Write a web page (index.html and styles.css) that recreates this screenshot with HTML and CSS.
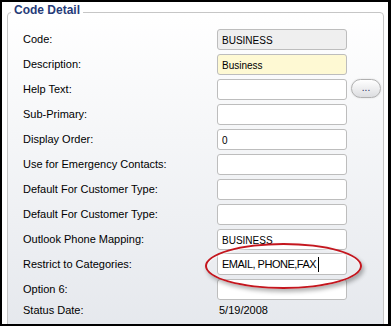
FILE: index.html
```html
<!DOCTYPE html>
<html lang="en">

<head>
    <meta charset="UTF-8">
    <meta name="viewport" content="width=device-width, initial-scale=1.0">
    <title>Code Detail</title>
    <link rel="stylesheet" href="styles.css">
</head>

<body>
    <div class="frame">
        <fieldset class="detail">
            <legend>Code Detail</legend>
            <div class="form">
                <div class="label">Code:</div>
                <div class="field readonly">BUSINESS</div>
                <div></div>

                <div class="label">Description:</div>
                <div class="field required">Business</div>
                <div></div>

                <div class="label">Help Text:</div>
                <div class="field"></div>
                <div class="btn">...</div>

                <div class="label">Sub-Primary:</div>
                <div class="field"></div>
                <div></div>

                <div class="label">Display Order:</div>
                <div class="field">0</div>
                <div></div>

                <div class="label">Use for Emergency Contacts:</div>
                <div class="field"></div>
                <div></div>

                <div class="label">Default For Customer Type:</div>
                <div class="field"></div>
                <div></div>

                <div class="label">Default For Customer Type:</div>
                <div class="field"></div>
                <div></div>

                <div class="label">Outlook Phone Mapping:</div>
                <div class="field">BUSINESS</div>
                <div></div>

                <div class="label">Restrict to Categories:</div>
                <div class="field focused">EMAIL, PHONE,FAX<span class="caret"></span></div>
                <div></div>

                <div class="label">Option 6:</div>
                <div class="field"></div>
                <div></div>

                <div class="label short">Status Date:</div>
                <div class="value">5/19/2008</div>
                <div></div>
            </div>
        </fieldset>
        <!-- annotation ring -->
        <div class="ring"></div>
    </div>
</body>

</html>
```

FILE: styles.css
```css
body {
    margin: 0;
    font-family: "Liberation Sans", Arial, sans-serif;
}

.frame {
    position: relative;
    width: 391px;
    height: 326px;
    box-sizing: border-box;
    border: 2px solid #000;
    border-right-width: 3px;
    background: #fff;
    overflow: hidden;
}

fieldset.detail {
    margin: 0 4px 0 5px;
    padding: 0;
    height: 340px;
    border: 1px solid #c6c6c6;
    border-radius: 4px;
    background: linear-gradient(#ffffff, #e4e7ec);
}

fieldset.detail legend {
    margin-left: 3px;
    padding: 0 3px 4px;
    font-size: 12px;
    font-weight: bold;
    line-height: 16px;
    color: #263b78;
}

.form {
    display: grid;
    grid-template-columns: 194px 130px auto;
    grid-auto-rows: 21px;
    row-gap: 4px;
    padding: 7px 0 0 15px;
}

.label {
    font-size: 11px;
    line-height: 21px;
    color: #000;
    white-space: nowrap;
}

.label.short,
.value {
    line-height: 12px;
}

.value {
    padding-left: 2px;
    font-size: 11px;
}

.field {
    height: 21px;
    box-sizing: border-box;
    padding: 4px 4px 0;
    border: 1px solid #bdbdbd;
    border-radius: 3px;
    background: #fff;
    font-size: 10px;
    line-height: 14px;
    color: #000;
    white-space: nowrap;
    overflow: hidden;
}

.field.readonly {
    background: #efefef;
}

.field.required {
    background: #fef9d3;
}

.field.focused {
    margin-top: -1px;
    height: 22px;
    padding-top: 3px;
    font-size: 11px;
    letter-spacing: -0.5px;
}

.caret {
    display: inline-block;
    width: 1px;
    height: 15px;
    margin-left: 2px;
    vertical-align: -4px;
    background: #000;
}

.btn {
    width: 30px;
    height: 19px;
    margin-left: 4px;
    box-sizing: border-box;
    border: 1px solid #b0b0b0;
    border-radius: 10px;
    background: linear-gradient(#ffffff, #dcdde0);
    box-shadow: 0 0 2px rgba(0, 0, 0, 0.15);
    font-size: 10px;
    line-height: 15px;
    text-align: center;
    color: #1d2c5e;
}

.ring {
    position: absolute;
    left: 203px;
    top: 241px;
    width: 157px;
    height: 46px;
    box-sizing: border-box;
    border: 2.5px solid #c4161e;
    border-radius: 50%;
    box-shadow: 2px 3px 4px rgba(0, 0, 0, 0.3), inset 0 1px 2px rgba(255, 255, 255, 0.9);
    pointer-events: none;
}
```
